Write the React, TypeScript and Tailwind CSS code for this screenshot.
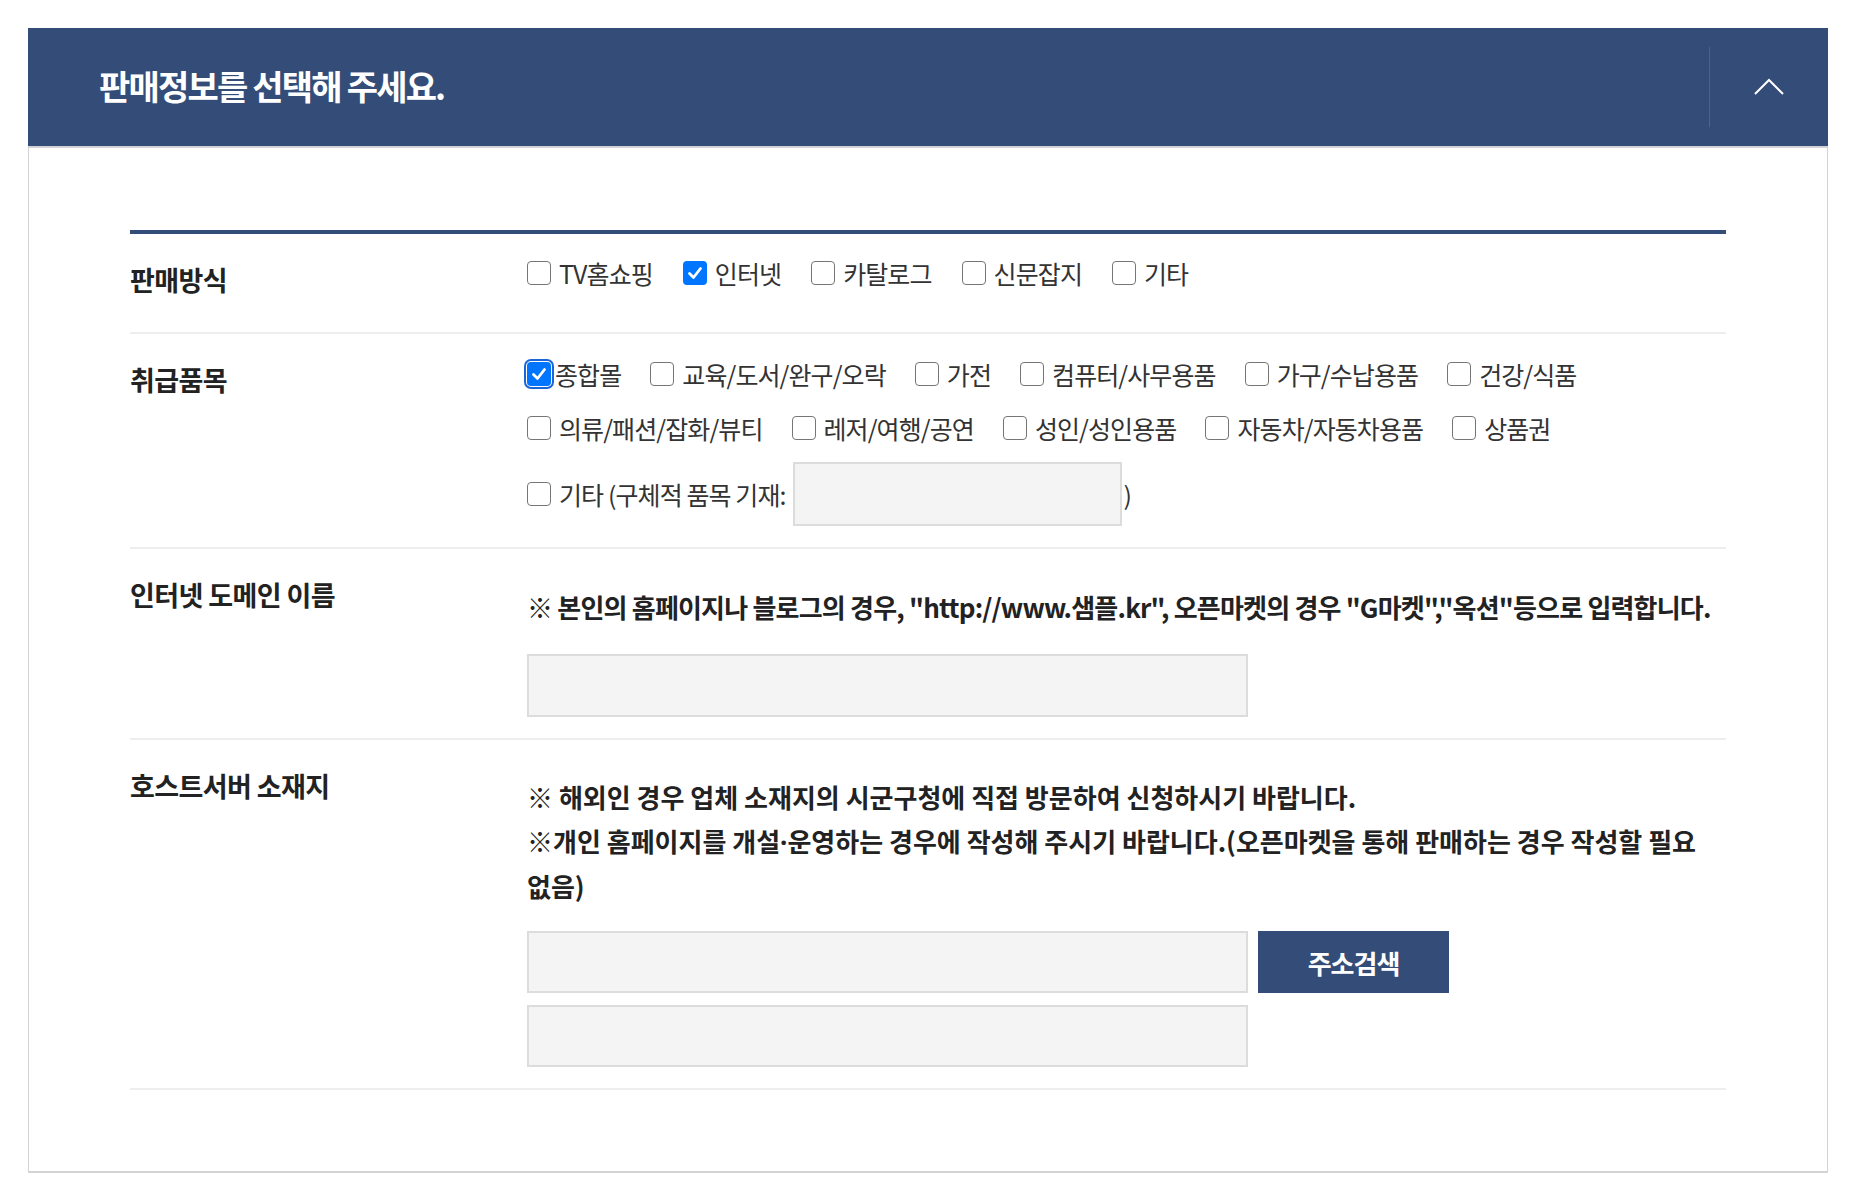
import React from "react";

const FONT = { fontFamily: '"Noto Sans CJK KR", "Noto Sans", sans-serif' };

function Box({ checked = false, focus = false }: { checked?: boolean; focus?: boolean }) {
  return (
    <span
      className={
        "relative inline-flex shrink-0 h-[24px] w-[24px] items-center justify-center rounded-[4px] " +
        (checked ? "bg-[#0075ff] " : "bg-white border-[1.5px] border-[#767676] ") +
        (focus ? "outline-2 outline-offset-1 outline-[#1a66d6] " : "")
      }
    >
      {checked && (
        <svg width="18" height="18" viewBox="0 0 18 18" fill="none">
          <path d="M3.5 9.5 L7.5 13.5 L14.5 4.5" stroke="white" strokeWidth="2.8" strokeLinecap="round" strokeLinejoin="round" />
        </svg>
      )}
    </span>
  );
}

function Opt({ label, checked, focus, gap = "gap-[8px]" }: { label: string; checked?: boolean; focus?: boolean; gap?: string }) {
  return (
    <label className={"flex items-center " + gap}>
      <Box checked={checked} focus={focus} />
      <span className="text-[25px] leading-[32px] tracking-[-0.9px] text-[#333]">{label}</span>
    </label>
  );
}

function Label({ children }: { children: React.ReactNode }) {
  return (
    <div className="w-[397px] shrink-0 pt-[30px] text-[27px] leading-[32px] font-bold tracking-[-0.6px] text-[#222]">
      {children}
    </div>
  );
}

function Field({ w = "w-[721px]", h = "h-[63px]" }: { w?: string; h?: string }) {
  return <div className={w + " " + h + " border-2 border-[#dcdcdc] bg-[#f4f4f4]"} />;
}

export default function App() {
  return (
    <div className="min-h-screen bg-white pt-[28px] px-[28px]" style={FONT}>
      <div className="w-[1800px]">
        <div className="flex h-[118px] items-center bg-[#344d78] pl-[71px]">
          <h1 className="-mt-[4px] text-[34px] font-bold tracking-[-1.8px] text-white">판매정보를 선택해 주세요.</h1>
          <div className="ml-auto h-[80px] w-px bg-[#4b6390]" />
          <div className="flex w-[118px] items-center justify-center">
            <svg width="32" height="18" viewBox="0 0 32 18" fill="none">
              <polyline points="2,16 16,2 30,16" stroke="white" strokeWidth="2" />
            </svg>
          </div>
        </div>
        <div className="border-x border-t-2 border-b-2 border-[#d3d3d3] px-[101px] pt-[82px] pb-[81px]">
          <div className="border-t-4 border-[#344d78]">
            <div className="flex border-b-2 border-[#eeeeee]">
              <Label>판매방식</Label>
              <div className="pt-[23px] pb-[43px]">
                <div className="flex h-8 items-center gap-[30px]">
                  <Opt label="TV홈쇼핑" />
                  <Opt label="인터넷" checked />
                  <Opt label="카탈로그" />
                  <Opt label="신문잡지" />
                  <Opt label="기타" />
                </div>
              </div>
            </div>

            <div className="flex border-b-2 border-[#eeeeee]">
              <Label>취급품목</Label>
              <div className="pt-[24px] pb-[21px]">
                <div className="flex h-8 items-center gap-[29px]">
                  <Opt label="종합몰" checked focus gap="gap-[4px]" />
                  <Opt label="교육/도서/완구/오락" />
                  <Opt label="가전" />
                  <Opt label="컴퓨터/사무용품" />
                  <Opt label="가구/수납용품" />
                  <Opt label="건강/식품" />
                </div>
                <div className="mt-[22px] flex h-8 items-center gap-[29px]">
                  <Opt label="의류/패션/잡화/뷰티" />
                  <Opt label="레저/여행/공연" />
                  <Opt label="성인/성인용품" />
                  <Opt label="자동차/자동차용품" />
                  <Opt label="상품권" />
                </div>
                <div className="mt-[18px] flex h-16 items-center">
                  <Opt label="기타 (구체적 품목 기재:" />
                  <div className="ml-[7px]">
                    <Field w="w-[329px]" h="h-[64px]" />
                  </div>
                  <span className="ml-[2px] text-[25px] leading-[32px] text-[#333]">)</span>
                </div>
              </div>
            </div>

            <div className="flex border-b-2 border-[#eeeeee]">
              <Label>인터넷 도메인 이름</Label>
              <div className="pt-[36px] pb-[21px]">
                <p className="text-[26px] leading-[44px] font-bold tracking-[-0.8px] text-[#222]">
                  ※ 본인의 홈페이지나 블로그의 경우, "http://www.샘플.kr", 오픈마켓의 경우 "G마켓","옥션"등으로 입력합니다.
                </p>
                <div className="mt-[25px]">
                  <Field />
                </div>
              </div>
            </div>

            <div className="flex border-b-2 border-[#eeeeee]">
              <Label>호스트서버 소재지</Label>
              <div className="flex-1 pt-[35px] pb-[21px]">
                <p className="text-[26px] leading-[44px] font-bold tracking-[0px] text-[#222]">
                  ※ 해외인 경우 업체 소재지의 시군구청에 직접 방문하여 신청하시기 바랍니다.
                  <br />
                  ※개인 홈페이지를 개설<span style={{ fontFamily: '"Noto Sans", sans-serif' }}>·</span>운영하는 경우에 작성해 주시기 바랍니다.(오픈마켓을 통해 판매하는 경우 작성할 필요
                  <br />
                  없음)
                </p>
                <div className="mt-[23px] flex items-center gap-[10px]">
                  <Field h="h-[62px]" />
                  <button className="flex h-[62px] w-[191px] items-center justify-center bg-[#344d78] text-[26px] font-bold tracking-[-1px] text-white">
                    주소검색
                  </button>
                </div>
                <div className="mt-[12px]">
                  <Field h="h-[62px]" />
                </div>
              </div>
            </div>
          </div>
        </div>
      </div>
    </div>
  );
}
